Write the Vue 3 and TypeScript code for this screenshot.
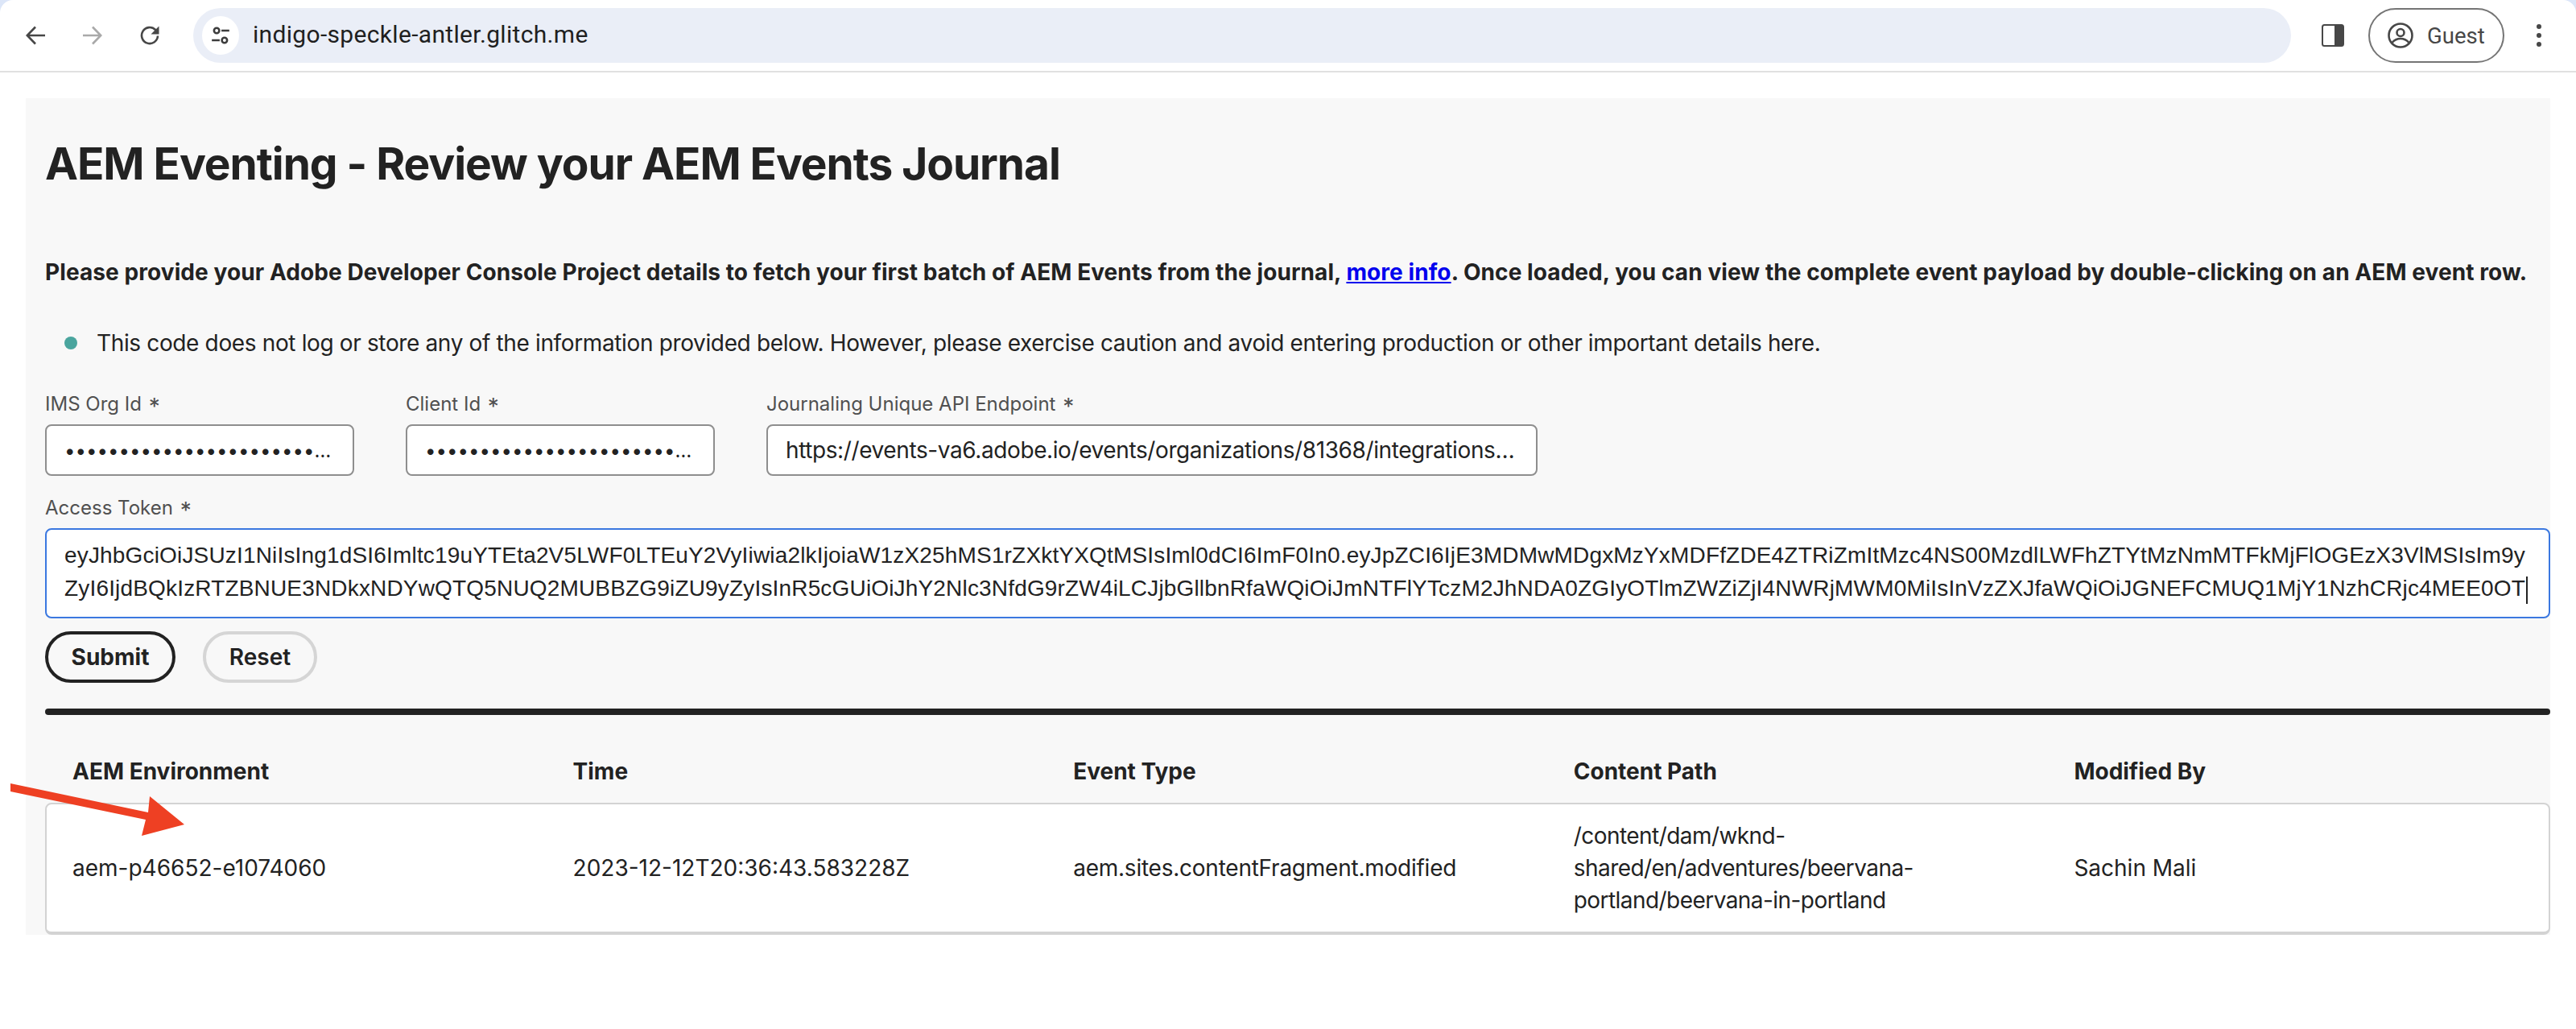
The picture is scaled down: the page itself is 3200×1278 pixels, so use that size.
<template>
  <div class="page">
    <header class="browser">
      <div class="toolbar">
        <nav class="nav-buttons">
          <svg class="nav-icon" viewBox="0 0 24 24"><path d="M12 1.500 1.800 12 12 22.500M2.500 12H24" /></svg>
          <svg class="nav-icon disabled" viewBox="0 0 24 24"><path d="M12 1.500 22.200 12 12 22.500M21.500 12H0" /></svg>
          <svg class="nav-icon" viewBox="0 0 24 24"><path d="M22 12.500a10 10 0 1 1-2.900-7.500L22 8" /><path class="solid" d="M23.500 0.500V10.500h-10z" /></svg>
        </nav>
        <div class="omnibox">
          <span class="site-chip">
            <svg viewBox="0 0 24 24" class="tune-icon">
              <circle cx="7.500" cy="6.500" r="3" />
              <path d="M13 6.500h9M2 17.500h9" />
              <circle cx="16.500" cy="17.500" r="3" />
            </svg>
          </span>
          <span class="url">indigo-speckle-antler.glitch.me</span>
        </div>
        <svg class="side-panel" viewBox="0 0 28 28"><rect x="1" y="1" width="26" height="26" rx="2.500" class="panel-frame" /><rect x="16" y="1" width="11" height="26" class="panel-fill" /></svg>
        <div class="profile">
          <svg viewBox="0 0 32 32" class="profile-icon">
            <circle cx="16" cy="16" r="14.500" />
            <circle cx="16" cy="12.500" r="4.500" />
            <path d="M5.500 25c3-3.500 6.500-5 10.500-5s7.500 1.500 10.500 5" />
          </svg>
          <span>Guest</span>
        </div>
        <div class="menu-dots"><i></i><i></i><i></i></div>
      </div>
    </header>

    <main class="panel">
      <h1>AEM Eventing - Review your AEM Events Journal</h1>
      <p class="intro">
        Please provide your Adobe Developer Console Project details to fetch your first batch of AEM Events from the journal,
        <a href="#">more info</a>. Once loaded, you can view the complete event payload by double-clicking on an AEM event row.
      </p>
      <ul class="notes">
        <li>This code does not log or store any of the information provided below. However, please exercise caution and avoid entering production or other important details here.</li>
      </ul>

      <div class="fields">
        <label class="field">
          <span class="field-label">IMS Org Id <em>*</em></span>
          <input class="short" type="password" :value="orgId" readonly />
        </label>
        <label class="field">
          <span class="field-label">Client Id <em>*</em></span>
          <input class="short" type="password" :value="clientId" readonly />
        </label>
        <label class="field">
          <span class="field-label">Journaling Unique API Endpoint <em>*</em></span>
          <input class="wide" type="text" :value="endpoint" readonly />
        </label>
      </div>

      <div class="field token-field">
        <span class="field-label">Access Token <em>*</em></span>
        <div class="token-box">
          <div v-for="(line, i) in tokenLines" :key="i" class="token-line">{{ line }}<span v-if="i === tokenLines.length - 1" class="caret"></span></div>
        </div>
      </div>

      <div class="actions">
        <button class="btn primary">Submit</button>
        <button class="btn secondary">Reset</button>
      </div>

      <hr class="divider" />

      <div class="table">
        <div class="table-head">
          <div v-for="col in columns" :key="col">{{ col }}</div>
        </div>
        <div v-for="row in rows" :key="row.time" class="table-row">
          <div>{{ row.env }}</div>
          <div>{{ row.time }}</div>
          <div class="cell-type">{{ row.type }}</div>
          <div class="cell-path">{{ row.path }}</div>
          <div>{{ row.by }}</div>
        </div>
      </div>
    </main>

    <svg class="arrow" viewBox="0 0 240 80" width="240" height="80">
      <polygon points="13,3 13,13 181,48 176,68 229,54 186,19 184,39" />
    </svg>
  </div>
</template>

<script setup lang="ts">
  const orgId = "••••••••••••••••••••••••••••••••••••••••";
  const clientId = "••••••••••••••••••••••••••••••••••••••••";
  const endpoint = "https://events-va6.adobe.io/events/organizations/81368/integrations/484571/5f1c2a7e-90b3-4c56-a1de";

  const tokenLines: string[] = [
    "eyJhbGciOiJSUzI1NiIsIng1dSI6Imltc19uYTEta2V5LWF0LTEuY2VyIiwia2lkIjoiaW1zX25hMS1rZXktYXQtMSIsIml0dCI6ImF0In0.eyJpZCI6IjE3MDMwMDgxMzYxMDFfZDE4ZTRiZmItMzc4NS00MzdlLWFhZTYtMzNmMTFkMjFlOGEzX3VlMSIsIm9y",
    "ZyI6IjdBQkIzRTZBNUE3NDkxNDYwQTQ5NUQ2MUBBZG9iZU9yZyIsInR5cGUiOiJhY2Nlc3NfdG9rZW4iLCJjbGllbnRfaWQiOiJmNTFlYTczM2JhNDA0ZGIyOTlmZWZiZjI4NWRjMWM0MiIsInVzZXJfaWQiOiJGNEFCMUQ1MjY1NzhCRjc4MEE0OT",
  ];

  const columns: string[] = ["AEM Environment", "Time", "Event Type", "Content Path", "Modified By"];

  const rows = [
    {
      env: "aem-p46652-e1074060",
      time: "2023-12-12T20:36:43.583228Z",
      type: "aem.sites.contentFragment.modified",
      path: "/content/dam/wknd-shared/en/adventures/beervana-portland/beervana-in-portland",
      by: "Sachin Mali",
    },
  ];
</script>

<style>
  html, body {
    background: #ffffff;
  }
</style>

<style scoped>
  .page {
    position: relative;
    height: 1278px;
    font-family: Inter, "Liberation Sans", sans-serif;
    color: #222222;
    overflow: hidden;
  }

  .browser {
    background: #dce6f8;
  }

  .toolbar {
    display: flex;
    align-items: center;
    height: 88px;
    padding: 0 40px 0 32px;
    background: #ffffff;
    border-radius: 16px 16px 0 0;
    border-bottom: 2px solid #e1e1e1;
  }

  .nav-buttons {
    display: flex;
    gap: 47px;
    margin-right: 42px;
  }

  .nav-icon {
    width: 24px;
    height: 24px;
    fill: none;
    stroke: #474747;
    stroke-width: 2.600;
  }

  .nav-icon.disabled {
    stroke: #a9a9a9;
  }

  .nav-icon .solid {
    fill: #474747;
    stroke: none;
  }

  .omnibox {
    display: flex;
    align-items: center;
    gap: 17px;
    width: 2606px;
    height: 68px;
    padding-left: 11px;
    box-sizing: border-box;
    border-radius: 34px;
    background: #eaeef7;
  }

  .site-chip {
    display: flex;
    align-items: center;
    justify-content: center;
    width: 46px;
    height: 48px;
    border-radius: 50%;
    background: #ffffff;
  }

  .tune-icon {
    width: 26px;
    height: 26px;
    fill: none;
    stroke: #3c3c3c;
    stroke-width: 2.400;
  }

  .url {
    padding-bottom: 3px;
    font-family: Roboto, sans-serif;
    font-size: 30px;
    letter-spacing: 0.32px;
    color: #1f1f1f;
  }

  .side-panel {
    width: 28px;
    height: 28px;
    margin-left: 38px;
  }

  .panel-frame {
    fill: #ffffff;
    stroke: #474747;
    stroke-width: 2;
  }

  .panel-fill {
    fill: #474747;
  }

  .profile {
    display: flex;
    align-items: center;
    gap: 17px;
    width: 169px;
    height: 68px;
    margin-left: 30px;
    padding-left: 22px;
    box-sizing: border-box;
    border: 2px solid #757575;
    border-radius: 34px;
    font-family: Roboto, sans-serif;
    font-size: 27.500px;
    color: #474747;
  }

  .profile-icon {
    width: 32px;
    height: 32px;
    fill: none;
    stroke: #474747;
    stroke-width: 2.600;
  }

  .menu-dots {
    display: flex;
    flex-direction: column;
    gap: 5px;
    margin-left: 40px;
  }

  .menu-dots i {
    width: 6px;
    height: 6px;
    border-radius: 50%;
    background: #474747;
  }

  .panel {
    margin: 32px 32px 0;
    padding: 49px 0 0 24px;
    background: #f8f8f8;
  }

  h1 {
    margin: 0;
    font-size: 55px;
    line-height: 64px;
    font-weight: 700;
    letter-spacing: -1.05px;
  }

  .intro {
    margin: 83px 0 0;
    font-size: 28px;
    line-height: 40px;
    font-weight: 700;
    letter-spacing: 0.08px;
    white-space: nowrap;
  }

  .intro a {
    color: #0000ee;
    text-decoration: underline;
  }

  .notes {
    margin: 48px 0 0;
    padding: 0 0 0 24px;
    list-style: none;
    font-size: 28px;
    line-height: 40px;
    letter-spacing: -0.36px;
    white-space: nowrap;
  }

  .notes li {
    display: flex;
    align-items: center;
    gap: 24px;
  }

  .notes li::before {
    content: "";
    width: 16px;
    height: 16px;
    border-radius: 50%;
    background: #4aa59e;
  }

  .fields {
    display: flex;
    gap: 64px;
    margin-top: 38px;
  }

  .field {
    display: flex;
    flex-direction: column;
    gap: 7px;
  }

  .field-label {
    font-size: 24px;
    line-height: 36px;
    color: #505050;
  }

  .field-label em {
    font-style: normal;
    font-size: 28px;
    line-height: 24px;
    margin-left: 2px;
    vertical-align: -5px;
  }

  input {
    height: 64px;
    box-sizing: border-box;
    padding: 0 22px;
    background: #ffffff;
    border: 2px solid #8e8e8e;
    border-radius: 8px;
    font-family: inherit;
    font-size: 28px;
    letter-spacing: -0.4px;
    color: #222222;
    text-overflow: ellipsis;
    outline: none;
  }

  input.short {
    width: 384px;
    font-size: 24px;
    letter-spacing: 0;
  }

  input.wide {
    width: 958px;
  }

  .token-field {
    margin-top: 22px;
  }

  .token-box {
    height: 112px;
    box-sizing: border-box;
    padding: 11px 22px 0;
    background: #ffffff;
    border: 2px solid #3b78e0;
    border-radius: 8px;
    font-family: "Liberation Sans", Arial, sans-serif;
    font-size: 28px;
    line-height: 41px;
    letter-spacing: 0.17px;
    color: #222222;
  }

  .token-line {
    white-space: nowrap;
  }

  .caret {
    display: inline-block;
    width: 2px;
    height: 34px;
    margin-left: 1px;
    vertical-align: middle;
    background: #222222;
  }

  .actions {
    display: flex;
    gap: 34px;
    margin-top: 16px;
  }

  .btn {
    height: 64px;
    box-sizing: border-box;
    border-radius: 32px;
    background: transparent;
    font-family: inherit;
    font-size: 28px;
    font-weight: 700;
    color: #222222;
  }

  .btn.primary {
    width: 162px;
    border: 4px solid #222222;
  }

  .btn.secondary {
    width: 142px;
    border: 4px solid #d5d5d5;
    font-weight: 600;
  }

  .divider {
    height: 8px;
    margin: 32px 0 0;
    border: 0;
    border-radius: 4px;
    background: #222222;
  }

  .table {
    margin-top: 50px;
    font-size: 28px;
    line-height: 40px;
  }

  .table-head,
  .table-row {
    display: grid;
    grid-template-columns: repeat(5, 621.6px);
    padding: 0 0 0 34px;
  }

  .table-head {
    font-weight: 700;
    margin-bottom: 19px;
  }

  .table-row {
    align-items: center;
    box-sizing: border-box;
    height: 164px;
    padding-left: 32px;
    background: #ffffff;
    border: 2px solid #d3d3d3;
    border-bottom-width: 4px;
    border-radius: 8px;
  }

  .table-row > div {
    padding-right: 30px;
  }

  .table-row .cell-type {
    letter-spacing: -0.24px;
  }

  .table-row .cell-path {
    letter-spacing: -0.56px;
  }

  .arrow {
    position: absolute;
    left: 0;
    top: 970px;
    fill: #ee4023;
  }
</style>
